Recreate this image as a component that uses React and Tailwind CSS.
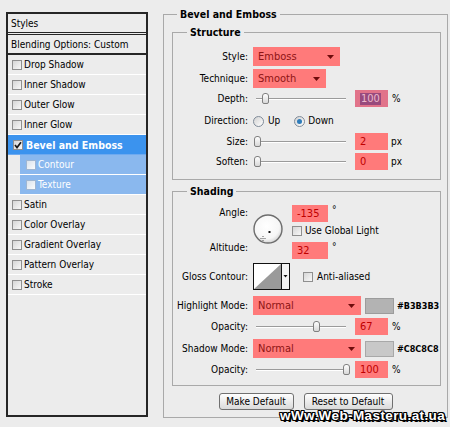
import React from "react";

function Check({ checked, onBlue }) {
  return (
    <span
      className={
        "w-[10px] h-[10px] shrink-0 flex items-center justify-center border " +
        (onBlue
          ? "border-[#9fb6d2] bg-linear-to-br from-[#d9e2ec] to-[#fbfcfd]"
          : "border-[#8f8f8f] bg-linear-to-br from-[#d6d6d6] to-[#f8f8f8]")
      }
    >
      {checked && (
        <svg width="8" height="8" viewBox="0 0 8 8">
          <path d="M1 4 L3 6.5 L7 1.2" stroke="#1a1a1a" strokeWidth="1.7" fill="none" />
        </svg>
      )}
    </span>
  );
}

function Row({ children }) {
  return (
    <div className="h-[20px] shrink-0 flex items-center pl-[4px] pt-[1px] border-b border-white">
      <Check />
      <span className="ml-[2px]">{children}</span>
    </div>
  );
}

function Drop({ w, text }) {
  return (
    <div className={w + " h-[19px] bg-[#ff7a7a] flex items-center pl-[5px] pr-[6px] text-[#8e1414] text-[11px]"}>
      <span className="flex-1">{text}</span>
      <svg width="7" height="4" viewBox="0 0 7 4">
        <path d="M0 0 H7 L3.5 4 Z" fill="#6e0c0c" />
      </svg>
    </div>
  );
}

function Inp({ w, children }) {
  return (
    <div className={(w || "w-[33px]") + " h-[17px] shrink-0 bg-[#ff7a7a] text-[#c00000] flex items-center pl-[5px] text-[11px]"}>
      {children}
    </div>
  );
}

function Slider({ thumb }) {
  return (
    <div className="relative w-[97px] h-[17px] shrink-0">
      <div className="absolute left-[3px] w-[90px] top-[8px] h-[2px] border-t border-[#9b9b9b] border-b border-b-white" />
      <div className={"absolute top-[3px] w-[7px] h-[11px] rounded-t-[3px] rounded-b-[2px] border border-[#808080] bg-linear-to-b from-white to-[#d8d8d8] " + thumb} />
    </div>
  );
}

function Radio({ on }) {
  return (
    <span className="w-[11px] h-[11px] shrink-0 rounded-full border border-[#7f8b99] bg-linear-to-br from-[#d2d2d2] to-white flex items-center justify-center">
      {on && <span className="w-[5px] h-[5px] rounded-full bg-[#2e7cba]" />}
    </span>
  );
}

function Label({ children }) {
  return <span className="w-[75px] shrink-0 text-right">{children}</span>;
}

export default function App() {
  return (
    <div className="relative w-[450px] h-[427px] bg-[#ececec] overflow-hidden text-[10px] leading-[12px] text-black flex items-start font-['DejaVu_Sans_Condensed','DejaVu_Sans','Liberation_Sans',sans-serif]">
      {/* Left styles panel */}
      <div className="ml-[6px] mt-[12px] w-[142px] h-[405px] shrink-0 border-2 border-[#262626] flex flex-col">
        <div className="h-[19px] shrink-0 flex items-center pl-[3px] pt-[1px] border-b border-[#262626]">Styles</div>
        <div className="h-[1px] shrink-0" />
        <div className="h-[21px] shrink-0 flex items-center pl-[3px] pt-[1px] border-t border-b-2 border-[#262626]">
          Blending Options: Custom
        </div>
        <Row>Drop Shadow</Row>
        <Row>Inner Shadow</Row>
        <Row>Outer Glow</Row>
        <Row>Inner Glow</Row>
        <div className="h-[20px] shrink-0 flex items-center pl-[5px] pt-[1px] bg-[#3b93ee] border-b border-[#6eaaf0] text-white font-bold text-[10.5px]">
          <Check checked />
          <span className="ml-[3px]">Bevel and Emboss</span>
        </div>
        <div className="h-[20px] shrink-0 flex border-b border-white">
          <div className="w-[12px] shrink-0" />
          <div className="flex-1 bg-[#8ab8ee] flex items-center pl-[6px] pt-[1px] text-white">
            <Check onBlue />
            <span className="ml-[2px]">Contour</span>
          </div>
        </div>
        <div className="h-[20px] shrink-0 flex border-b border-white">
          <div className="w-[12px] shrink-0" />
          <div className="flex-1 bg-[#8ab8ee] flex items-center pl-[6px] pt-[1px] text-white">
            <Check onBlue />
            <span className="ml-[2px]">Texture</span>
          </div>
        </div>
        <Row>Satin</Row>
        <Row>Color Overlay</Row>
        <Row>Gradient Overlay</Row>
        <Row>Pattern Overlay</Row>
        <Row>Stroke</Row>
      </div>

      {/* Right: Bevel and Emboss */}
      <fieldset className="ml-[15px] mt-[8px] w-[285px] h-[410px] shrink-0 border border-[#a9a9a9]">
        <legend className="ml-[13px] px-[3px] font-bold text-[10.5px] leading-[12px]">Bevel and Emboss</legend>

        {/* Structure */}
        <fieldset className="ml-[8px] mt-[6px] w-[269px] h-[154px] border border-[#a9a9a9]">
          <legend className="ml-[14px] px-[3px] font-bold text-[10.5px] leading-[12px]">Structure</legend>
          <div className="mt-[9px] h-[19px] flex items-center gap-[5px]">
            <Label>Style:</Label>
            <Drop w="w-[87px]" text="Emboss" />
          </div>
          <div className="mt-[3px] h-[19px] flex items-center gap-[5px]">
            <Label>Technique:</Label>
            <Drop w="w-[73px]" text="Smooth" />
          </div>
          <div className="mt-[2px] h-[17px] flex items-center">
            <Label>Depth:</Label>
            <div className="ml-[5px]"><Slider thumb="left-[9px]" /></div>
            <div className="ml-[5px] w-[33px] h-[17px] bg-[#e1738a] flex items-center pl-[5px]">
              <span className="bg-[#984a7d] text-[#ecb9cc] px-[1px] leading-[12px] text-[11px]">100</span>
            </div>
            <span className="ml-[4px]">%</span>
          </div>
          <div className="mt-[6px] h-[16px] flex items-center">
            <Label>Direction:</Label>
            <span className="ml-[5px]"><Radio /></span>
            <span className="ml-[4px]">Up</span>
            <span className="ml-[14px]"><Radio on /></span>
            <span className="ml-[3px]">Down</span>
          </div>
          <div className="mt-[4px] h-[17px] flex items-center">
            <Label>Size:</Label>
            <div className="ml-[5px]"><Slider thumb="left-[1px]" /></div>
            <div className="ml-[5px]"><Inp>2</Inp></div>
            <span className="ml-[3px]">px</span>
          </div>
          <div className="mt-[3px] h-[17px] flex items-center">
            <Label>Soften:</Label>
            <div className="ml-[5px]"><Slider thumb="left-[1px]" /></div>
            <div className="ml-[5px]"><Inp>0</Inp></div>
            <span className="ml-[3px]">px</span>
          </div>
        </fieldset>

        {/* Shading */}
        <fieldset className="ml-[8px] mt-[5px] w-[269px] h-[201px] border border-[#a9a9a9]">
          <legend className="ml-[14px] px-[3px] font-bold text-[10.5px] leading-[12px]">Shading</legend>
          <div className="mt-[8px] flex items-start">
            <div className="w-[75px] shrink-0 flex flex-col items-end">
              <span className="mt-[2px]">Angle:</span>
              <span className="mt-[23px]">Altitude:</span>
            </div>
            <svg className="ml-[5px] mt-[9px] shrink-0" width="30" height="30" viewBox="0 0 30 30">
              <defs>
                <radialGradient id="dial" cx="0.45" cy="0.4" r="0.6">
                  <stop offset="0" stopColor="#ffffff" />
                  <stop offset="0.75" stopColor="#f6f6f6" />
                  <stop offset="1" stopColor="#d6d6d6" />
                </radialGradient>
              </defs>
              <circle cx="15" cy="15" r="14" fill="url(#dial)" stroke="#6d6d6d" strokeWidth="1.4" />
              <rect x="15.5" y="17" width="2" height="2" fill="#111" />
              <g fill="#555">
                <rect x="9.5" y="22" width="1" height="1" />
                <rect x="9.5" y="26" width="1" height="1" />
                <rect x="7.5" y="24" width="1" height="1" />
                <rect x="11.5" y="24" width="1" height="1" />
                <rect x="9.5" y="24" width="1" height="1" />
              </g>
            </svg>
            <div className="ml-[9px] flex flex-col">
              <div className="flex items-start">
                <Inp w="w-[36px]">-135</Inp>
                <span className="ml-[4px] leading-[10px]">°</span>
              </div>
              <div className="mt-[2px] h-[13px] flex items-center">
                <Check />
                <span className="ml-[3px]">Use Global Light</span>
              </div>
              <div className="mt-[5px] flex items-start">
                <Inp w="w-[36px]">32</Inp>
                <span className="ml-[4px] leading-[10px]">°</span>
              </div>
            </div>
          </div>

          <div className="mt-[4px] h-[27px] flex items-center">
            <Label>Gloss Contour:</Label>
            <svg className="ml-[5px] shrink-0" width="37" height="27" viewBox="0 0 37 27">
              <rect x="0.5" y="0.5" width="36" height="26" fill="#ffffff" stroke="#111" />
              <path d="M1 26 L28 1 L28 26 Z" fill="#9a9a9a" />
              <line x1="28.5" y1="0.5" x2="28.5" y2="26.5" stroke="#111" />
              <rect x="29" y="1" width="7" height="25" fill="#f4f4f4" />
              <path d="M30.5 12 H34.5 L32.5 14.5 Z" fill="#111" />
            </svg>
            <span className="ml-[13px]"><Check /></span>
            <span className="ml-[4px]">Anti-aliased</span>
          </div>

          <div className="mt-[6px] h-[19px] flex items-center">
            <Label>Highlight Mode:</Label>
            <div className="ml-[5px]"><Drop w="w-[108px]" text="Normal" /></div>
            <div className="ml-[4px] w-[29px] h-[16px] bg-[#b3b3b3] border border-[#9c9c9c]" />
            <span className="ml-[3px] font-bold text-[9px]">#B3B3B3</span>
          </div>
          <div className="mt-[3px] h-[17px] flex items-center">
            <Label>Opacity:</Label>
            <div className="ml-[5px]"><Slider thumb="left-[60px]" /></div>
            <div className="ml-[5px]"><Inp>67</Inp></div>
            <span className="ml-[4px]">%</span>
          </div>
          <div className="mt-[4px] h-[19px] flex items-center">
            <Label>Shadow Mode:</Label>
            <div className="ml-[5px]"><Drop w="w-[108px]" text="Normal" /></div>
            <div className="ml-[4px] w-[29px] h-[16px] bg-[#c8c8c8] border border-[#a8a8a8]" />
            <span className="ml-[3px] font-bold text-[9px]">#C8C8C8</span>
          </div>
          <div className="mt-[3px] h-[17px] flex items-center">
            <Label>Opacity:</Label>
            <div className="ml-[5px]"><Slider thumb="left-[90px]" /></div>
            <div className="ml-[5px]"><Inp>100</Inp></div>
            <span className="ml-[4px]">%</span>
          </div>
        </fieldset>

        <div className="mt-[7px] flex justify-center gap-[10px]">
          <button className="w-[75px] h-[17px] rounded-[3px] border border-[#707070] bg-linear-to-b from-white to-[#dadada] text-[10px] leading-[12px]">
            Make Default
          </button>
          <button className="w-[89px] h-[17px] rounded-[3px] border border-[#707070] bg-linear-to-b from-white to-[#dadada] text-[10px] leading-[12px]">
            Reset to Default
          </button>
        </div>
      </fieldset>

      {/* watermark */}
      <div className="absolute left-[280px] top-[408px] text-white font-bold text-[13.5px] leading-[16px] tracking-[0.4px] font-['Liberation_Sans',sans-serif] [text-shadow:1px_0_0_#000,-1px_0_0_#000,0_1px_0_#000,0_-1px_0_#000,1px_1px_0_#000,-1px_-1px_0_#000,1px_-1px_0_#000,-1px_1px_0_#000,2px_2px_0_#000]">
        wWw.Web-Masteru.at.ua
      </div>
    </div>
  );
}
